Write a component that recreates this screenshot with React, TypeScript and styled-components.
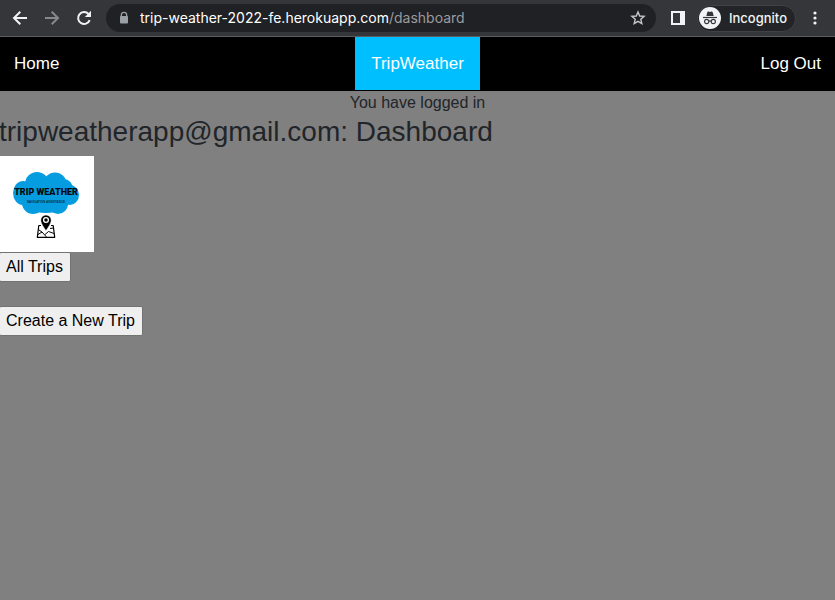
import React from "react";
import styled, { createGlobalStyle } from "styled-components";

const GlobalStyle = createGlobalStyle`
  *, *::before, *::after { box-sizing: border-box; }
  body {
    margin: 0;
    background: #808080;
    color: #212529;
    font-family: "Liberation Sans", Arial, sans-serif;
    font-size: 16px;
    line-height: 24px;
    overflow-x: hidden;
  }
  button { margin: 0; }
`;

const Toolbar = styled.header`
  display: flex;
  align-items: center;
  height: 37px;
  padding: 0 8px;
  background: #35363a;
  border-bottom: 1px solid #5c5d61;
  font-family: Inter, sans-serif;
`;

const IconButton = styled.button<{ $dim?: boolean }>`
  display: flex;
  align-items: center;
  justify-content: center;
  flex: none;
  width: 24px;
  height: 28px;
  padding: 0;
  border: 0;
  background: none;
  color: ${(p) => (p.$dim ? "#87888b" : "#f1f3f4")};
`;

const NavButtons = styled.div`
  display: flex;
  gap: 8px;
  margin-right: 10px;
`;

const AddressBar = styled.div`
  display: flex;
  align-items: center;
  flex: 1;
  min-width: 0;
  height: 28px;
  padding: 0 6px 0 12px;
  border-radius: 14px;
  background: #202124;
`;

const Address = styled.div`
  flex: 1;
  min-width: 0;
  margin-left: 10px;
  overflow: hidden;
  white-space: nowrap;
  font-family: Inter, sans-serif;
  font-size: 14px;
  line-height: 20px;
  color: #ffffff;
`;

const Path = styled.span`
  color: #9a9b9e;
`;

const ToolbarActions = styled.div`
  display: flex;
  align-items: center;
  gap: 7px;
  margin-left: 10px;
`;

const ProfileButton = styled.button`
  display: flex;
  align-items: center;
  gap: 8px;
  height: 27px;
  padding: 0 8px 0 1px;
  border: 1px solid #404145;
  border-radius: 14px;
  background: #232427;
  color: #f1f3f4;
  font-family: Inter, sans-serif;
  font-size: 13px;
  font-weight: 500;
  line-height: 20px;
`;

const NavBar = styled.nav`
  display: grid;
  grid-template-columns: 1fr auto 1fr;
  align-items: center;
  height: 54px;
  padding: 0 14px;
  background: #000000;
`;

const NavLink = styled.a<{ $end?: boolean }>`
  justify-self: ${(p) => (p.$end ? "end" : "start")};
  color: #ffffff;
  font-size: 17px;
  line-height: 24px;
  text-decoration: none;
`;

const BrandLink = styled(NavLink)`
  align-self: start;
  padding: 15px 16px 14px;
  background: #00bfff;
`;

const Notice = styled.p`
  margin: 0;
  text-align: center;
`;

const Title = styled.h1`
  margin: 0 0 8px -1px;
  font-size: 28px;
  font-weight: 400;
  line-height: 33px;
`;

const Logo = styled.svg`
  display: block;
  width: 94px;
  height: 96px;
  background: #ffffff;
`;

const Actions = styled.div`
  display: flex;
  flex-direction: column;
  align-items: flex-start;
  gap: 24px;
  margin-left: -1px;
`;

const ActionButton = styled.button`
  height: 30px;
  padding: 0 7px 0 6px;
  border: 1px solid #737373;
  border-radius: 2px;
  background: #efefef;
  color: #000000;
  font-family: "Liberation Sans", Arial, sans-serif;
  font-size: 16px;
  line-height: 24px;
`;

const BackIcon = () => (
  <svg width="16" height="16" viewBox="0 0 16 16" fill="none" stroke="currentColor" strokeWidth="2">
    <path d="M15 8H2.5M8.3 1.8 2 8l6.3 6.2" />
  </svg>
);

const ForwardIcon = () => (
  <svg width="16" height="16" viewBox="0 0 16 16" fill="none" stroke="currentColor" strokeWidth="2">
    <path d="M1 8h12.5M7.7 1.8 14 8l-6.3 6.2" />
  </svg>
);

const ReloadIcon = () => (
  <svg width="16" height="16" viewBox="0 0 16 16" fill="none">
    <path d="M13.7 10.2A6 6 0 1 1 12.5 3.9L14 5.4" stroke="currentColor" strokeWidth="2" />
    <path d="M15 .8V7H8.8Z" fill="currentColor" />
  </svg>
);

const LockIcon = () => (
  <svg width="12" height="14" viewBox="0 0 12 14" aria-hidden="true">
    <path d="M3.3 6V4a2.7 2.7 0 0 1 5.4 0v2" fill="none" stroke="#9aa0a6" strokeWidth="1.3" />
    <rect x="2" y="5" width="8" height="7.5" rx="1" fill="#9aa0a6" />
  </svg>
);

const StarIcon = () => (
  <svg width="16" height="16" viewBox="0 0 16 16" fill="none" stroke="#c6c7ca" strokeWidth="1.4">
    <path d="m8 2 1.7 4 4.4.4-3.3 2.9 1 4.3L8 11.3l-3.8 2.3 1-4.3-3.3-2.9L6.3 6Z" />
  </svg>
);

const PanelIcon = () => (
  <svg width="14" height="14" viewBox="0 0 14 14">
    <path d="M0 0h14v14H0ZM2 2v10h7V2Z" fill="currentColor" fillRule="evenodd" />
  </svg>
);

const IncognitoIcon = () => (
  <svg width="22" height="22" viewBox="0 0 22 22" aria-hidden="true">
    <circle cx="11" cy="11" r="11" fill="#f1f3f4" />
    <path d="M7.3 9 8.3 5.2Q8.6 4.3 9.6 4.5L11 4.9 12.4 4.5Q13.4 4.3 13.7 5.2L14.7 9Z" fill="#35363a" />
    <path d="M4 10.5h14" stroke="#35363a" strokeWidth="1.2" />
    <g fill="none" stroke="#35363a" strokeWidth="1.1">
      <circle cx="7.7" cy="14.5" r="2.1" />
      <circle cx="14.3" cy="14.5" r="2.1" />
      <path d="M9.8 14.3q1.2-.8 2.4 0" />
    </g>
  </svg>
);

const MenuIcon = () => (
  <svg width="4" height="14" viewBox="0 0 4 14" fill="currentColor">
    <circle cx="2" cy="2" r="1.6" />
    <circle cx="2" cy="7" r="1.6" />
    <circle cx="2" cy="12" r="1.6" />
  </svg>
);

const TripLogo = () => (
  <Logo viewBox="0 0 94 96" role="img" aria-label="Trip Weather navigation assistance">
    <g fill="#069de0">
      <ellipse cx="23" cy="37" rx="10" ry="12" />
      <circle cx="37" cy="28" r="12" />
      <circle cx="55" cy="28" r="11.5" />
      <ellipse cx="64" cy="33" rx="9" ry="10" />
      <ellipse cx="70" cy="39" rx="9" ry="10" />
      <circle cx="33" cy="47" r="11" />
      <circle cx="58" cy="48" r="10" />
      <ellipse cx="46" cy="44" rx="24" ry="13" />
    </g>
    <text x="46" y="39" textAnchor="middle" fill="#05090c" fontFamily="Roboto, sans-serif" fontWeight="900" fontSize="9">
      TRIP WEATHER
    </text>
    <text x="46" y="47" textAnchor="middle" fill="#05304a" fontFamily="'Liberation Sans', sans-serif" fontWeight="700" fontSize="3">
      NAVIGATION ASSISTANCE
    </text>
    <g fill="none" stroke="#000" strokeWidth="1.2" strokeLinejoin="round">
      <path d="M41 69.500h-2.200L37.300 81.300h17.400L53.200 69.500H51" />
      <path d="M38.300 73.500 42 76l-4 2.500M42 76l4.500 5M45 78.500l3.500-3 5.500 2M50 72.500l3.300-.5" strokeWidth="1" />
    </g>
    <path d="M46 59a5.200 5.200 0 0 0-5.200 5.200C40.800 68 46 74.500 46 74.500S51.200 68 51.200 64.200A5.200 5.200 0 0 0 46 59Z" fill="#000" stroke="#fff" strokeWidth=".5" />
    <circle cx="46" cy="64" r="2.400" fill="#000" stroke="#fff" strokeWidth="1.300" />
  </Logo>
);

export default function App() {
  return (
    <>
      <GlobalStyle />
      <Toolbar>
        <NavButtons>
          <IconButton aria-label="Back"><BackIcon /></IconButton>
          <IconButton $dim aria-label="Forward"><ForwardIcon /></IconButton>
          <IconButton aria-label="Reload"><ReloadIcon /></IconButton>
        </NavButtons>
        <AddressBar>
          <LockIcon />
          <Address>trip-weather-2022-fe.herokuapp.com<Path>/dashboard</Path></Address>
          <IconButton aria-label="Bookmark this page"><StarIcon /></IconButton>
        </AddressBar>
        <ToolbarActions>
          <IconButton aria-label="Side panel"><PanelIcon /></IconButton>
          <ProfileButton><IncognitoIcon />Incognito</ProfileButton>
          <IconButton aria-label="Browser menu"><MenuIcon /></IconButton>
        </ToolbarActions>
      </Toolbar>
      <NavBar>
        <NavLink href="#home">Home</NavLink>
        <BrandLink href="#trip-weather">TripWeather</BrandLink>
        <NavLink $end href="#log-out">Log Out</NavLink>
      </NavBar>
      <main>
        <Notice>You have logged in</Notice>
        <Title>tripweatherapp@gmail.com: Dashboard</Title>
        <TripLogo />
        <Actions>
          <ActionButton>All Trips</ActionButton>
          <ActionButton>Create a New Trip</ActionButton>
        </Actions>
      </main>
    </>
  );
}
